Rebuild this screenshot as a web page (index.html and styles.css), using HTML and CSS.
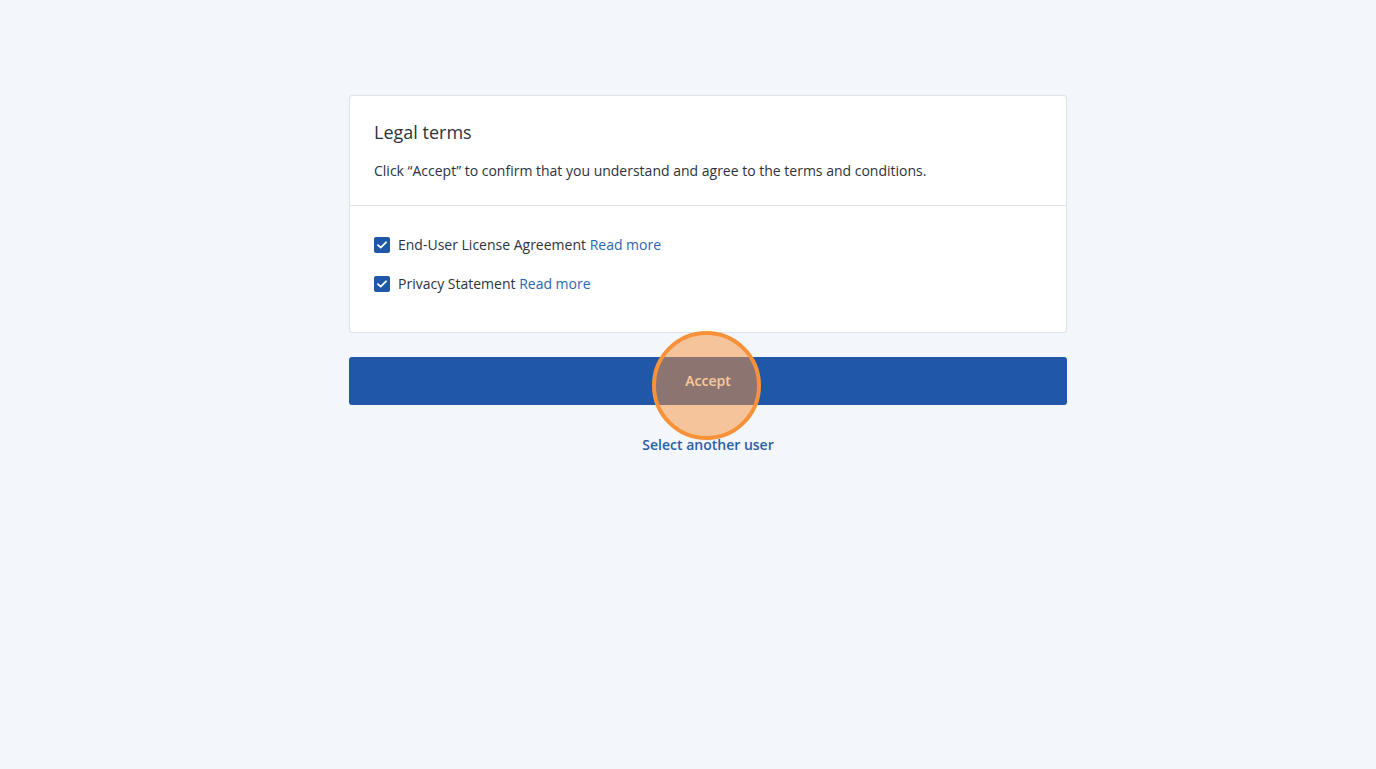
FILE: index.html
```html
<!DOCTYPE html>
<html lang="en">
<head>
    <meta charset="UTF-8">
    <meta name="viewport" content="width=device-width, initial-scale=1.0">
    <title>Legal terms</title>
    <link rel="stylesheet" href="styles.css">
</head>
<body>
    <div class="page">
        <div class="wrap">
            <div class="card">
                <div class="card-head">
                    <h1 class="title">Legal terms</h1>
                    <p class="desc">Click “Accept” to confirm that you understand and agree to the terms and conditions.</p>
                </div>
                <div class="card-body">
                    <label class="check-row">
                        <span class="box">
                            <svg width="10" height="8" viewBox="0 0 10 8"><path d="M1 4.2 L3.7 6.6 L9 1.3" fill="none" stroke="#fff" stroke-width="1.8" stroke-linecap="round" stroke-linejoin="round"/></svg>
                        </span>
                        <span>End-User License Agreement <a class="link" href="#">Read more</a></span>
                    </label>
                    <label class="check-row">
                        <span class="box">
                            <svg width="10" height="8" viewBox="0 0 10 8"><path d="M1 4.2 L3.7 6.6 L9 1.3" fill="none" stroke="#fff" stroke-width="1.8" stroke-linecap="round" stroke-linejoin="round"/></svg>
                        </span>
                        <span>Privacy Statement <a class="link" href="#">Read more</a></span>
                    </label>
                </div>
            </div>

            <div class="btn-wrap">
                <button class="btn-accept">Accept</button>
                <!-- click marker -->
                <span class="click-mark"></span>
            </div>

            <a class="other-user" href="#">Select another user</a>
        </div>
    </div>
</body>
</html>
```

FILE: styles.css
```css
* {
    margin: 0;
    padding: 0;
    box-sizing: border-box;
}
html, body {
    height: 100%;
}
body {
    background: #f3f6fb;
    font-family: "Open Sans", "Noto Sans", sans-serif;
    color: #2c333d;
    font-size: 14px;
}
.page {
    display: flex;
    justify-content: center;
    padding-left: 40px;
    padding-top: 95px;
}
.wrap {
    width: 718px;
    display: flex;
    flex-direction: column;
    align-items: center;
}
.card {
    width: 100%;
    background: #fff;
    border: 1px solid #dde3ea;
    border-radius: 3px;
}
.card-head {
    padding: 23px 24px 24px;
    border-bottom: 1px solid #dde3ea;
}
.title {
    font-size: 18px;
    font-weight: 400;
    line-height: 26px;
    color: #2c333d;
}
.desc {
    margin-top: 16px;
    line-height: 20px;
}
.card-body {
    padding: 29px 24px 38px;
    display: flex;
    flex-direction: column;
    gap: 19px;
}
.check-row {
    display: flex;
    align-items: center;
    gap: 8px;
    line-height: 20px;
    cursor: pointer;
}
.box {
    width: 16px;
    height: 16px;
    border-radius: 2px;
    background: #2057a8;
    display: flex;
    align-items: center;
    justify-content: center;
}
.link {
    color: #2a66b1;
    text-decoration: none;
}
.btn-wrap {
    position: relative;
    width: 100%;
    margin-top: 24px;
}
.btn-accept {
    width: 100%;
    height: 48px;
    border: none;
    border-radius: 3px;
    background: #2057a8;
    color: #fff;
    font-family: inherit;
    font-size: 14px;
    font-weight: 600;
    line-height: 46px;
    cursor: pointer;
}
.click-mark {
    position: absolute;
    left: 303px;
    top: -26px;
    width: 109px;
    height: 109px;
    border-radius: 50%;
    border: 4px solid #f7923a;
    background: rgba(247, 146, 58, 0.5);
    pointer-events: none;
}
.other-user {
    margin-top: 30px;
    color: #2a5fa6;
    font-weight: 600;
    text-decoration: none;
    line-height: 20px;
}
```
